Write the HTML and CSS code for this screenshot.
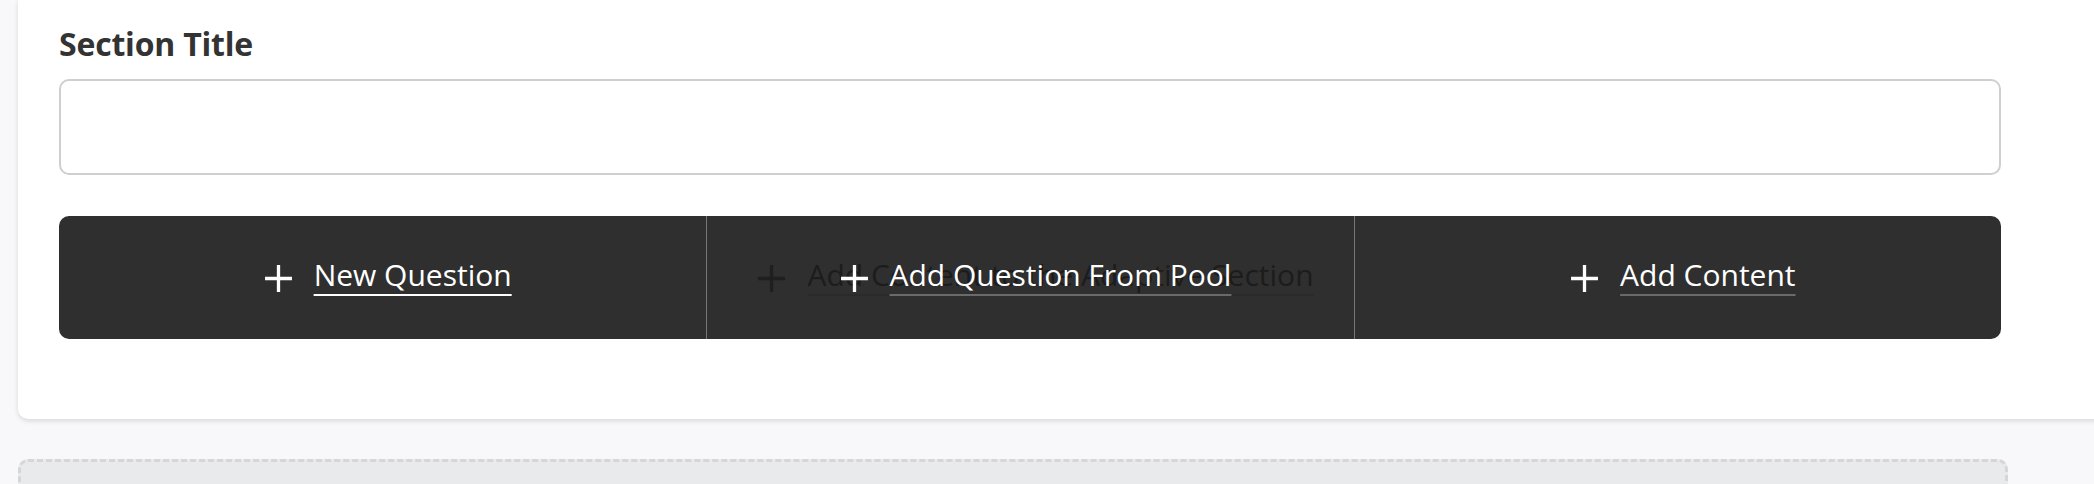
FILE: index.html
```html
<!DOCTYPE html>
<html>
<head>
<meta charset="utf-8">
<link rel="stylesheet" href="styles.css">
</head>
<body>
<div class="page">
  <section class="card">
    <label class="field-label">Section Title</label>
    <div class="text-input"></div>
    <div class="action-bar">
      <div class="action">
        <div class="action-inner">
          <svg class="plus" viewBox="0 0 28 28"><path d="M14 1V27M1 14H27"/></svg>
          <span class="label underline-white">New Question</span>
        </div>
      </div>
      <div class="action action-stack">
        <div class="action-inner ghost">
          <svg class="plus" viewBox="0 0 28 28"><path d="M14 1V27M1 14H27"/></svg>
          <span class="label underline-dark">Add Content to the Adaptive Section</span>
        </div>
        <div class="action-inner front">
          <svg class="plus" viewBox="0 0 28 28"><path d="M14 1V27M1 14H27"/></svg>
          <span class="label underline-gray">Add Question From Pool</span>
        </div>
      </div>
      <div class="action">
        <div class="action-inner">
          <svg class="plus" viewBox="0 0 28 28"><path d="M14 1V27M1 14H27"/></svg>
          <span class="label underline-gray">Add Content</span>
        </div>
      </div>
    </div>
  </section>
  <div class="drop-zone"></div>
</div>
</body>
</html>
```
FILE: styles.css
```css
html, body {
  margin: 0;
  padding: 0;
  background: #f8f8fa;
  overflow: hidden;
  height: 484px;
}

.page {
  font-family: "Open Sans", "Liberation Sans", sans-serif;
  display: flex;
  flex-direction: column;
  height: 484px;
  overflow: hidden;
}

.card {
  flex: none;
  margin-left: 18px;
  margin-right: -40px;
  background: #ffffff;
  border-radius: 0 0 10px 10px;
  box-shadow: 0 2px 5px rgba(0, 0, 0, 0.13);
  padding: 24px 41px 80px 41px;
  display: flex;
  flex-direction: column;
  align-items: flex-start;
}

.field-label {
  font-size: 32px;
  line-height: 40px;
  font-weight: 700;
  color: #333333;
  letter-spacing: -0.2px;
}

.text-input {
  margin-top: 15px;
  width: 1942px;
  height: 96px;
  box-sizing: border-box;
  border: 2px solid #cfcfcf;
  border-radius: 10px;
  background: #fff;
}

.action-bar {
  margin-top: 41px;
  width: 1942px;
  height: 123px;
  background: #2f2f2f;
  border-radius: 10px;
  display: grid;
  grid-template-columns: 1fr 1fr 1fr;
}

.action {
  display: grid;
  place-items: center;
  padding: 0 0 6px 10px;
}

.action + .action {
  border-left: 1px solid #767676;
}

.action-stack > .action-inner {
  grid-area: 1 / 1;
}

.action-inner {
  display: flex;
  align-items: center;
  gap: 21px;
}

.plus {
  width: 29px;
  height: 29px;
  margin-top: 8px;
  fill: none;
  stroke: #ffffff;
  stroke-width: 3.2;
}

.label {
  font-size: 30px;
  line-height: 40px;
  color: #ffffff;
  white-space: nowrap;
  text-decoration: underline;
  text-decoration-thickness: 2px;
  text-underline-offset: 8px;
}

.underline-white {
  text-decoration-color: #ffffff;
}

.underline-gray {
  text-decoration-color: #6a6a6a;
}

.ghost .label {
  color: #1c1c1c;
  text-decoration-color: #2a2a2a;
}

.ghost .plus {
  stroke: #1f1f1f;
}

.drop-zone {
  flex: none;
  margin-top: 40px;
  margin-left: 18px;
  width: 1990px;
  height: 120px;
  box-sizing: border-box;
  background: #e9eaec;
  border: 3px dashed #d6d6d8;
  border-radius: 10px;
}
```
